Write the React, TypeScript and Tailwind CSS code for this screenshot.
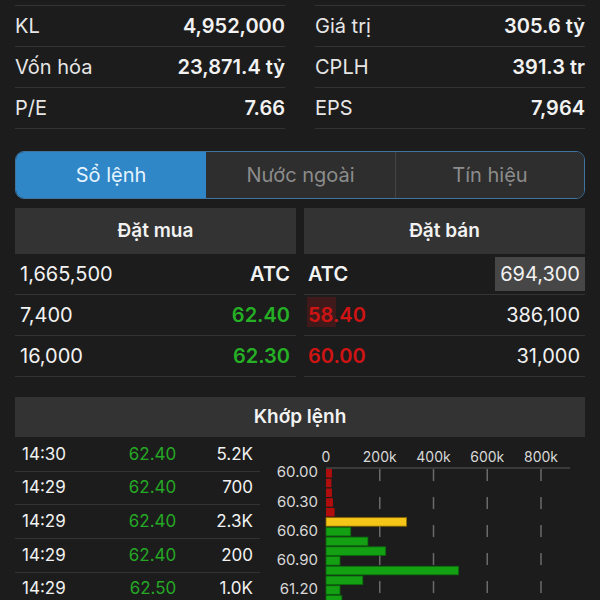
const font = { fontFamily: "Inter, 'Noto Sans', sans-serif" };

const stats = [
  ["KL", "4,952,000", "Giá trị", "305.6 tỷ"],
  ["Vốn hóa", "23,871.4 tỷ", "CPLH", "391.3 tr"],
  ["P/E", "7.66", "EPS", "7,964"],
];

const buys = [
  { qty: "1,665,500", price: "ATC", color: "text-[#f2f2f2]" },
  { qty: "7,400", price: "62.40", color: "text-[#25b025]" },
  { qty: "16,000", price: "62.30", color: "text-[#25b025]" },
];

const sells = [
  { price: "ATC", qty: "694,300", color: "text-[#f2f2f2]", hl: true },
  { price: "58.40", qty: "386,100", color: "text-[#d01414]", flash: true },
  { price: "60.00", qty: "31,000", color: "text-[#d01414]" },
];

const trades = [
  ["14:30", "62.40", "5.2K"],
  ["14:29", "62.40", "700"],
  ["14:29", "62.40", "2.3K"],
  ["14:29", "62.40", "200"],
  ["14:29", "62.50", "1.0K"],
];

// volume per price step, in thousands
const bars = [
  { v: 22, c: "#b00d0d" },
  { v: 20, c: "#b00d0d" },
  { v: 22, c: "#b00d0d" },
  { v: 26, c: "#b00d0d" },
  { v: 32, c: "#b00d0d" },
  { v: 300, c: "#f5c518" },
  { v: 92, c: "#13a013" },
  { v: 156, c: "#13a013" },
  { v: 222, c: "#13a013" },
  { v: 52, c: "#13a013" },
  { v: 493, c: "#13a013" },
  { v: 137, c: "#13a013" },
  { v: 52, c: "#13a013" },
  { v: 59, c: "#13a013" },
];

function Chart() {
  const ox = 66;
  const step = 53.75;
  const pitch = 9.73;
  const k = step / 200;
  return (
    <svg width="325" height="175" className="block" style={font}>
      {[0, 1, 2, 3, 4].map((i) => (
        <text
          key={i}
          x={ox + i * step}
          y={25}
          textAnchor="middle"
          fontSize="14"
          fill="#d8d8d8"
        >
          {i === 0 ? "0" : `${i * 200}k`}
        </text>
      ))}
      <line x1={ox} y1={31} x2={310} y2={31} stroke="#5a5a5a" strokeWidth="1" />
      {[1, 2, 3, 4].map((i) => (
        <line
          key={i}
          x1={ox + i * step}
          y1={32}
          x2={ox + i * step}
          y2={175}
          stroke="#6a6a6a"
          strokeWidth="1.5"
          strokeDasharray="12 16"
        />
      ))}
      {bars.map((b, i) => (
        <rect
          key={i}
          x={ox}
          y={32 + i * pitch}
          width={Math.max(b.v * k, 5)}
          height={pitch - 1.2}
          fill={b.c}
          stroke={b.c === "#f5c518" ? "#8a6d00" : b.c === "#13a013" ? "#0b6a0b" : "none"}
          strokeWidth="0.8"
        />
      ))}
      {["60.00", "60.30", "60.60", "60.90", "61.20"].map((l, i) => (
        <text
          key={l}
          x={58}
          y={32 + i * 3 * pitch + 4.4}
          textAnchor="end"
          dominantBaseline="middle"
          fontSize="15"
          fill="#d8d8d8"
        >
          {l}
        </text>
      ))}
    </svg>
  );
}

export default function App() {
  return (
    <div className="w-[600px] min-h-[600px] bg-[#1c1c1c] text-[#f2f2f2]" style={font}>
      <div className="grid grid-cols-2 gap-x-[30px] px-[15px] pt-[5px]">
        {[0, 1].map((col) => (
          <div key={col} className="border-t border-[#333]">
            {stats.map((r) => (
              <div
                key={r[col * 2]}
                className="flex h-[41px] items-center justify-between border-b border-[#333] text-[20px]"
              >
                <span className="text-[#e6e6e6]">{r[col * 2]}</span>
                <span className="font-semibold">{r[col * 2 + 1]}</span>
              </div>
            ))}
          </div>
        ))}
      </div>

      <div className="mx-[15px] mt-[22px] flex h-[48px] overflow-hidden rounded-[9px] border border-[#3f74a3] text-[20px]">
        <div className="flex w-[190px] items-center justify-center bg-[#2f87c8] text-[#e6f4ff]">
          Sổ lệnh
        </div>
        <div className="flex flex-1 items-center justify-center bg-[#2e2e2e] text-[#8c8c8c]">
          Nước ngoài
        </div>
        <div className="flex w-[189px] items-center justify-center border-l border-[#444] bg-[#2e2e2e] text-[#8c8c8c]">
          Tín hiệu
        </div>
      </div>

      <div className="mt-[9px] grid grid-cols-2 gap-x-[8px] px-[15px]">
        <div>
          <div className="flex h-[46px] items-center justify-center bg-[#333] text-[19px] font-semibold">
            Đặt mua
          </div>
          {buys.map((b) => (
            <div
              key={b.qty}
              className="flex h-[41px] items-center justify-between border-b border-[#333] pl-[5px] pr-[6px] text-[20px]"
            >
              <span>{b.qty}</span>
              <span className={`font-semibold ${b.color}`}>{b.price}</span>
            </div>
          ))}
        </div>
        <div>
          <div className="flex h-[46px] items-center justify-center bg-[#333] text-[19px] font-semibold">
            Đặt bán
          </div>
          {sells.map((s) => (
            <div
              key={s.qty}
              className="flex h-[41px] items-center justify-between border-b border-[#333] pl-[4px] text-[20px]"
            >
              <span className={`relative font-semibold ${s.color}`}>
                {s.flash && (
                  <span className="absolute left-[-1px] top-[-3px] h-[30px] w-[29px] bg-[#d01414]/20" />
                )}
                <span className="relative">{s.price}</span>
              </span>
              <span
                className={
                  s.hl
                    ? "flex h-[34px] items-center bg-[#474747] px-[5px]"
                    : "pr-[5px]"
                }
              >
                {s.qty}
              </span>
            </div>
          ))}
        </div>
      </div>

      <div className="mx-[15px] mt-[20px] flex h-[40px] items-center justify-center bg-[#333] text-[19px] font-semibold">
        Khớp lệnh
      </div>

      <div className="flex px-[15px]">
        <div className="w-[245px] pt-[1px]">
          {trades.map((t, i) => (
            <div
              key={i}
              className="grid h-[33.7px] grid-cols-3 items-center border-b border-[#333] text-[17px]"
            >
              <span className="pl-[7px]">{t[0]}</span>
              <span className="pr-[2px] text-right text-[#25a825]">{t[1]}</span>
              <span className="pr-[7px] text-right">{t[2]}</span>
            </div>
          ))}
        </div>
        <Chart />
      </div>
    </div>
  );
}
